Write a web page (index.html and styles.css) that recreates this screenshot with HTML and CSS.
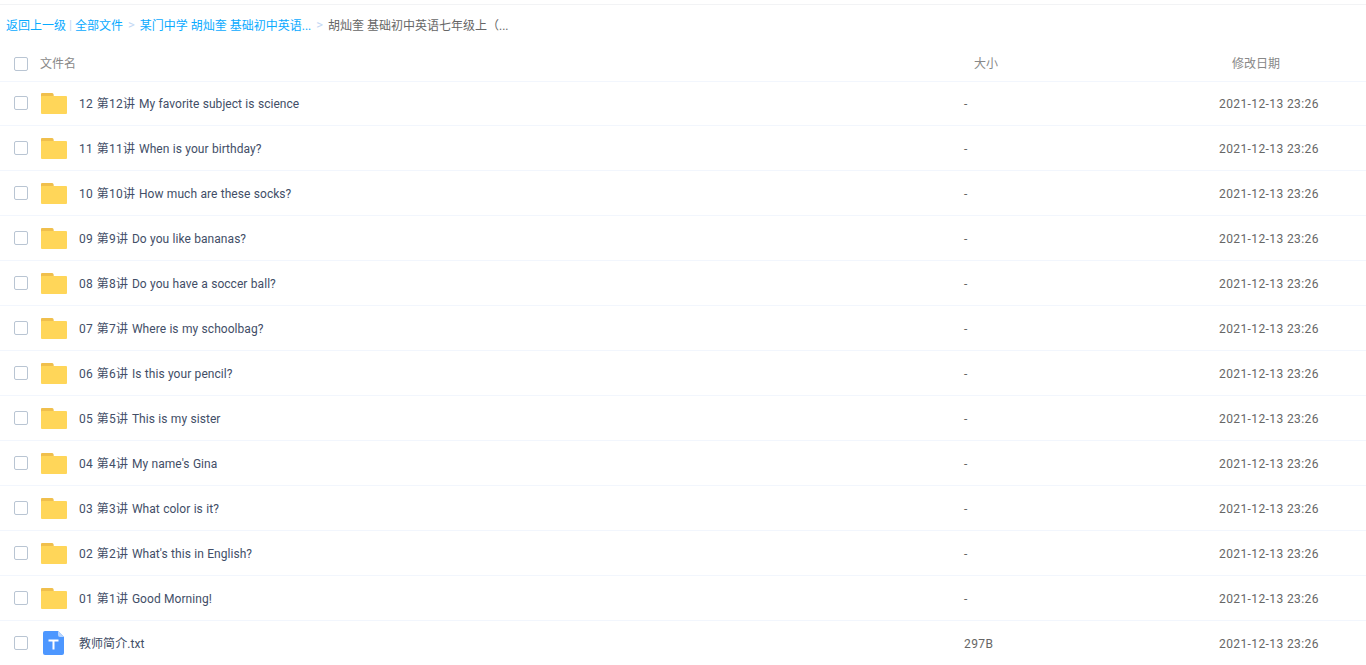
FILE: index.html
```html
<!DOCTYPE html>
<html lang="zh-CN">
<head>
    <meta charset="UTF-8">
    <meta name="viewport" content="width=device-width, initial-scale=1.0">
    <title>全部文件</title>
    <link rel="stylesheet" href="styles.css">
</head>
<body>
    <svg class="icon-defs" width="0" height="0">
        <symbol id="folder" viewBox="0 0 26 21">
            <path d="M1 0h10a2 2 0 0 1 1.500 1L13 5H0V1a1 1 0 0 1 1-1z" fill="#f0bf4c"/>
            <path d="M1 3h24a1 1 0 0 1 1 1v16a1 1 0 0 1-1 1H1a1 1 0 0 1-1-1V4a1 1 0 0 1 1-1z" fill="#ffd659"/>
        </symbol>
    </svg>

    <div class="crumbs">
        <a>返回上一级</a><span class="pipe">|</span><a>全部文件</a><span class="sep">&gt;</span><a>某门中学 胡灿奎 基础初中英语...</a><span class="sep">&gt;</span><span class="current">胡灿奎 基础初中英语七年级上（...</span>
    </div>

    <div class="list-head">
        <span class="check"></span>
        <span class="head-name">文件名</span>
        <span class="head-size">大小</span>
        <span class="head-date">修改日期</span>
    </div>

    <ul class="list">
        <li class="row"><span class="check"></span><svg class="folder"><use href="#folder"/></svg><span class="name"><span class="idx">12 第12讲 </span>My favorite subject is science</span><span class="size">-</span><span class="date">2021-12-13 23:26</span></li>
        <li class="row"><span class="check"></span><svg class="folder"><use href="#folder"/></svg><span class="name"><span class="idx">11 第11讲 </span>When is your birthday?</span><span class="size">-</span><span class="date">2021-12-13 23:26</span></li>
        <li class="row"><span class="check"></span><svg class="folder"><use href="#folder"/></svg><span class="name"><span class="idx">10 第10讲 </span>How much are these socks?</span><span class="size">-</span><span class="date">2021-12-13 23:26</span></li>
        <li class="row"><span class="check"></span><svg class="folder"><use href="#folder"/></svg><span class="name"><span class="idx">09 第9讲 </span>Do you like bananas?</span><span class="size">-</span><span class="date">2021-12-13 23:26</span></li>
        <li class="row"><span class="check"></span><svg class="folder"><use href="#folder"/></svg><span class="name"><span class="idx">08 第8讲 </span>Do you have a soccer ball?</span><span class="size">-</span><span class="date">2021-12-13 23:26</span></li>
        <li class="row"><span class="check"></span><svg class="folder"><use href="#folder"/></svg><span class="name"><span class="idx">07 第7讲 </span>Where is my schoolbag?</span><span class="size">-</span><span class="date">2021-12-13 23:26</span></li>
        <li class="row"><span class="check"></span><svg class="folder"><use href="#folder"/></svg><span class="name"><span class="idx">06 第6讲 </span>Is this your pencil?</span><span class="size">-</span><span class="date">2021-12-13 23:26</span></li>
        <li class="row"><span class="check"></span><svg class="folder"><use href="#folder"/></svg><span class="name"><span class="idx">05 第5讲 </span>This is my sister</span><span class="size">-</span><span class="date">2021-12-13 23:26</span></li>
        <li class="row"><span class="check"></span><svg class="folder"><use href="#folder"/></svg><span class="name"><span class="idx">04 第4讲 </span>My name's Gina</span><span class="size">-</span><span class="date">2021-12-13 23:26</span></li>
        <li class="row"><span class="check"></span><svg class="folder"><use href="#folder"/></svg><span class="name"><span class="idx">03 第3讲 </span>What color is it?</span><span class="size">-</span><span class="date">2021-12-13 23:26</span></li>
        <li class="row"><span class="check"></span><svg class="folder"><use href="#folder"/></svg><span class="name"><span class="idx">02 第2讲 </span>What's this in English?</span><span class="size">-</span><span class="date">2021-12-13 23:26</span></li>
        <li class="row"><span class="check"></span><svg class="folder"><use href="#folder"/></svg><span class="name"><span class="idx">01 第1讲 </span>Good Morning!</span><span class="size">-</span><span class="date">2021-12-13 23:26</span></li>
        <li class="row">
            <span class="check"></span>
            <svg class="txt" viewBox="0 0 21 24">
                <path d="M2 0h13l6 6v16a2 2 0 0 1-2 2H2a2 2 0 0 1-2-2V2a2 2 0 0 1 2-2z" fill="#4d97ff"/>
                <path d="M15 0l6 6h-4a2 2 0 0 1-2-2z" fill="#b8d5ff"/>
                <path d="M5.500 8.500h10v2h-4v8h-2v-8h-4z" fill="#fff"/>
            </svg>
            <span class="name">教师简介.txt</span><span class="size">297B</span><span class="date">2021-12-13 23:26</span>
        </li>
    </ul>
</body>
</html>
```

FILE: styles.css
```css
* {
    box-sizing: border-box;
}
html, body {
    height: 100%;
}
body {
    margin: 0;
    overflow: hidden;
    background: #fff;
    font-family: Roboto, "Noto Sans CJK SC", sans-serif;
    font-size: 12px;
    color: #424e67;
}
.icon-defs {
    display: block;
    height: 0;
}
.crumbs {
    height: 41px;
    margin-top: 4px;
    padding-left: 6px;
    padding-bottom: 1px;
    border-top: 1px solid #f2f3f5;
    display: flex;
    align-items: center;
    white-space: nowrap;
    color: #666;
}
.crumbs a {
    color: #09aaff;
}
.pipe {
    margin: 0 3px 0 3px;
    color: #c4d8f4;
}
.sep {
    margin: 0 5px;
    font-size: 13px;
    color: #c4d8f4;
}
.current {
    color: #666;
}
.list-head {
    height: 37px;
    padding-left: 14px;
    border-bottom: 1px solid #f2f6fd;
    display: grid;
    grid-template-columns: 26px 934px 258px 1fr;
    align-items: center;
    color: #888;
}
.list-head .check {
    margin-top: 2px;
}
.head-name, .head-size, .head-date {
    padding-bottom: 2px;
}
.check {
    display: block;
    width: 14px;
    height: 14px;
    border: 1px solid #b9c5d3;
    border-radius: 2px;
    background: #fff;
}
.list {
    list-style: none;
    margin: -1px 0 0;
    padding: 0;
}
.row {
    height: 45px;
    padding-left: 14px;
    border-bottom: 1px solid #f2f6fd;
    display: grid;
    grid-template-columns: 27px 38px 885px 255px 1fr;
    align-items: center;
}
.folder {
    width: 26px;
    height: 21px;
}
.txt {
    width: 21px;
    height: 24px;
    margin-left: 2px;
}
.name {
    padding-bottom: 2px;
    letter-spacing: 0.05px;
    word-spacing: 0.3px;
}
.idx {
    letter-spacing: 0.3px;
}
.size, .date {
    padding-top: 2px;
    color: #666;
    letter-spacing: 0.4px;
}
```
